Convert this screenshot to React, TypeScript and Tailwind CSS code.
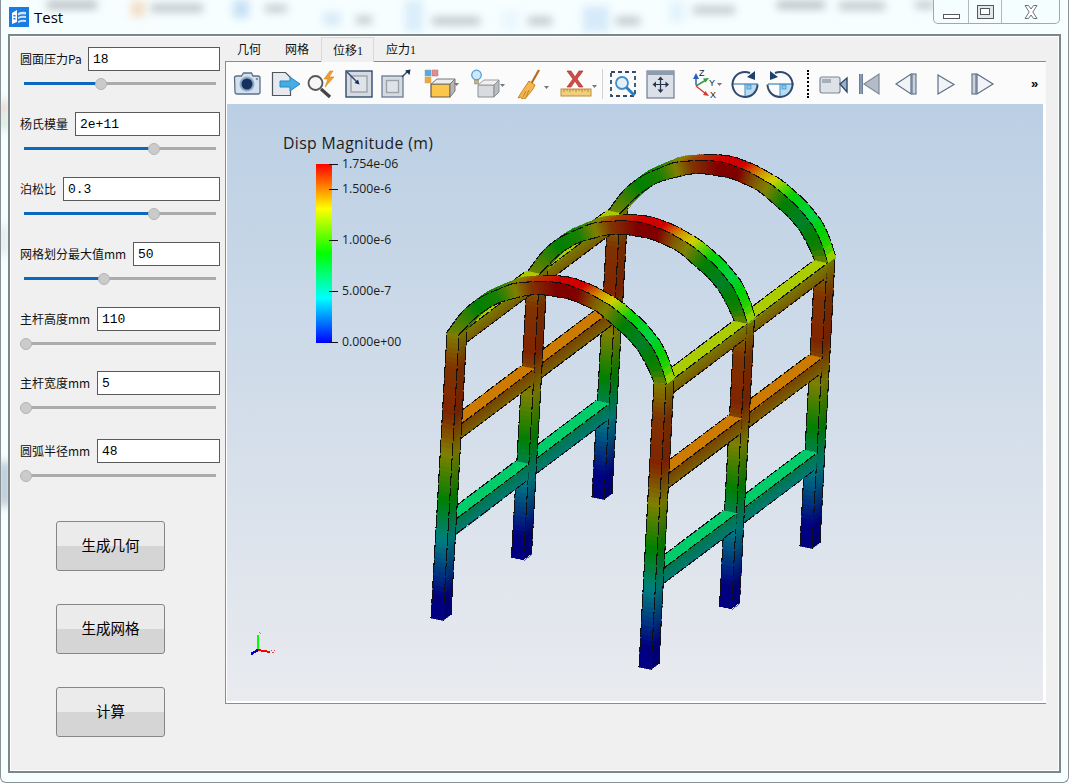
import React from "react";

type P = [number, number];
const add = (a: P, b: P, k = 1): P => [a[0] + b[0] * k, a[1] + b[1] * k];
const lerp = (a: P, b: P, t: number): P => [a[0] + (b[0] - a[0]) * t, a[1] + (b[1] - a[1]) * t];
const XV: P = [12, 2.5];
const ZV: P = [8, -6];
const BAY: P = [80.5, -60.5];

function rainbow(v: number, shade: number) {
  let r = 0, g = 0, b = 0;
  if (v < 0.25) { g = 4 * v; b = 1; }
  else if (v < 0.5) { g = 1; b = 1 - (v - 0.25) * 4; }
  else if (v < 0.75) { r = (v - 0.5) * 4; g = 1; }
  else { r = 1; g = 1 - (v - 0.75) * 4; }
  return `rgb(${Math.round(r * 255 * shade)},${Math.round(g * 255 * shade)},${Math.round(b * 255 * shade)})`;
}
function interp(knots: number[][], x: number) {
  if (x <= knots[0][0]) return knots[0][1];
  for (let i = 1; i < knots.length; i++) {
    if (x <= knots[i][0]) {
      const t = (x - knots[i - 1][0]) / (knots[i][0] - knots[i - 1][0]);
      return knots[i - 1][1] + (knots[i][1] - knots[i - 1][1]) * t;
    }
  }
  return knots[knots.length - 1][1];
}
const legK = [[0, 0], [0.08, 0], [0.28, 0.25], [0.42, 0.5], [0.58, 0.75], [0.72, 0.93], [0.88, 0.9], [1, 0.75]];
const archK = [[0, 0.72], [0.12, 0.5], [0.22, 0.55], [0.3, 0.75], [0.38, 0.9], [0.5, 1], [0.6, 1], [0.68, 0.82], [0.74, 0.74], [0.82, 0.5], [0.91, 0.42], [0.98, 0.55], [1, 0.72]];

const outerK = [[447, 332], [463, 310], [480, 297], [513, 283], [543, 281], [563, 283], [587, 292], [613, 307], [637, 328], [657, 353], [667, 384]];
const innerK = [[459, 334.5], [478, 315], [497, 303], [527, 295], [543, 294.5], [570, 299], [597, 311], [630, 340], [643, 357], [654, 382]];
const smooth = (knots: number[][], x: number) => {
  const d = 5;
  const lo = knots[0][0], hi = knots[knots.length - 1][0];
  const w = Math.min(d, x - lo, hi - x);
  return (interp(knots, x - w) + interp(knots, x) + interp(knots, x + w)) / 3;
};
const outer = (s: number): P => { const x = 447 + 220 * s; return [x, smooth(outerK, x)]; };
const inner = (s: number): P => { const x = 459 + 195 * s; return [x, smooth(innerK, x)]; };

const order: { kind: "poly" | "line"; pts: P[]; fill?: string }[] = [];
const quad = (pts: P[], fill: string) => order.push({ kind: "poly", pts, fill });
const edge = (pts: P[]) => order.push({ kind: "line", pts });

function leg(base: P, top: P, off: P) {
  const a = (f: number) => add(lerp(base, top, f), off);
  const n = 60;
  for (let i = 0; i < n; i++) {
    const f0 = i / n, f1 = (i + 1) / n;
    const v = interp(legK, (f0 + f1) / 2);
    const p0 = a(f0), p1 = a(f1);
    quad([add(p0, XV), add(add(p0, XV), ZV), add(add(p1, XV), ZV), add(p1, XV)], rainbow(v, 0.45));
    quad([p0, add(p0, XV), add(p1, XV), p1], rainbow(v, 0.5));
  }
  edge([a(0), a(1)]);
  edge([add(a(0), XV), add(a(1), XV)]);
  edge([add(add(a(0), XV), ZV), add(add(a(1), XV), ZV)]);
}
function arch(off: P) {
  const n = 100;
  const curve = (fn: (s: number) => P, shift: P) => {
    const pts: P[] = [];
    for (let i = 0; i <= n; i++) pts.push(add(add(fn(i / n), off), shift));
    return pts;
  };
  const topShade = (s: number) => (s < 0.3 ? 0.52 : s > 0.5 ? 0.82 : 0.52 + (s - 0.3) * 1.5);
  for (let i = 0; i < n; i++) {
    const s0 = i / n, s1 = (i + 1) / n, m = (s0 + s1) / 2;
    const v = interp(archK, m);
    const o0 = add(outer(s0), off), o1 = add(outer(s1), off);
    quad([o0, o1, add(o1, ZV), add(o0, ZV)], rainbow(v, topShade(m)));
  }
  for (let i = 0; i < n; i++) {
    const s0 = i / n, s1 = (i + 1) / n, m = (s0 + s1) / 2;
    const v = interp(archK, m);
    const o0 = add(inner(s0), off), o1 = add(inner(s1), off);
    quad([o0, o1, add(o1, ZV), add(o0, ZV)], rainbow(v, 0.45));
  }
  for (let i = 0; i < n; i++) {
    const s0 = i / n, s1 = (i + 1) / n, m = (s0 + s1) / 2;
    const v = interp(archK, m);
    quad([add(outer(s0), off), add(outer(s1), off), add(inner(s1), off), add(inner(s0), off)], rainbow(v, 0.5));
  }
  edge(curve(outer, [0, 0]));
  edge(curve(inner, [0, 0]));
  edge(curve(outer, ZV).slice(40));
}
function beam(base: P, top: P, off: P, fb: number, ft: number, topV: number) {
  const c = (f: number): P => add(add(lerp(base, top, f), XV), off);
  const n = 5;
  for (let i = 0; i < n; i++) {
    const f0 = fb + ((ft - fb) * i) / n, f1 = fb + ((ft - fb) * (i + 1)) / n;
    const v = interp(legK, (f0 + f1) / 2);
    quad([add(c(f0), ZV), add(c(f0), BAY), add(c(f1), BAY), add(c(f1), ZV)], rainbow(v, 0.47));
  }
  const t0 = add(c(ft), ZV), t1 = add(c(ft), BAY);
  const w: P = [-13.5, -3];
  quad([t0, t1, add(t1, w), add(t0, w)], rainbow(topV, 0.8));
  edge([t0, t1]);
  edge([add(c(fb), ZV), add(c(fb), BAY)]);
  edge([add(t0, w), add(t1, w)]);
}
const LB: P = [431, 618], LT: P = [447, 332], RB: P = [639, 667], RT: P = [654, 382];
for (let z = 2; z >= 0; z--) {
  const off: P = [BAY[0] * z, BAY[1] * z];
  leg(LB, LT, off);
  leg(RB, RT, off);
  arch(off);
  if (z > 0) {
    const o2: P = [BAY[0] * (z - 1), BAY[1] * (z - 1)];
    for (const [b, t] of [[LB, LT], [RB, RT]] as [P, P][]) {
      beam(b, t, o2, 0.28, 0.335, 0.37);
      beam(b, t, o2, 0.615, 0.668, 0.85);
      beam(b, t, o2, 0.95, 1, 0.71);
    }
  }
}
const str = (pts: P[]) => pts.map((p) => `${p[0].toFixed(1)},${p[1].toFixed(1)}`).join(" ");

function Frame3D() {
  return (
    <g shapeRendering="crispEdges">
      {order.map((o, i) =>
        o.kind === "poly" ? (
          <polygon key={i} points={str(o.pts)} fill={o.fill} stroke={o.fill} strokeWidth={0.6} />
        ) : (
          <polyline key={i} points={str(o.pts)} fill="none" stroke="#111" strokeWidth={1.1} strokeDasharray="13 2" />
        )
      )}
    </g>
  );
}

const cjk = "font-['Noto_Sans_CJK_SC','Noto_Sans',sans-serif]";

function Field({ label, labelW, value, fill, mb }: { label: string; labelW: string; value: string; fill: string; mb: string }) {
  return (
    <div className={mb}>
      <div className="flex items-center h-[24px] pl-[9px] pr-[5px]">
        <span className={`${labelW} text-[12px] leading-[24px] text-[#111] whitespace-nowrap ${cjk}`}>{label}</span>
        <div className="flex-1 h-[24px] border border-[#5a5a5a] bg-white pl-[4px] font-['Liberation_Mono',monospace] text-[13px] leading-[23px] text-black">{value}</div>
      </div>
      <div className="flex items-center h-[13px] mt-[6px] ml-[13px] w-[192px]">
        <div className={`${fill} h-[3px] bg-[#0b68bd]`} />
        <div className="w-[12px] h-[12px] -ml-[6px] -mr-[6px] rounded-full bg-[#cbcbcb] border border-[#b4b4b4] relative z-10" />
        <div className="flex-1 h-[3px] bg-[#ababab]" />
      </div>
    </div>
  );
}

function Btn({ label, mt }: { label: string; mt: string }) {
  return (
    <div className={`${mt} ml-[45px] w-[109px] h-[50px] pb-[3px] rounded-[3px] border border-[#868686] bg-[linear-gradient(#ebebeb_0,#ebebeb_50%,#d5d5d5_50%,#d5d5d5_100%)] flex items-center justify-center text-[14.5px] text-black ${cjk}`}>
      {label}
    </div>
  );
}

const navy = "#2f4a6c";
const slate = "#5b6f88";
const Icon = ({ w = 30, className = "", children }: { w?: number; className?: string; children: React.ReactNode }) => (
  <svg width={w} height={30} viewBox={`0 0 ${w} 30`} className={`shrink-0 ${className}`}>
    {children}
  </svg>
);
const Drop = ({ x, y }: { x: number; y: number }) => <path d={`M${x} ${y}h5l-2.5 3z`} fill="#777" />;

function Toolbar() {
  return (
    <div className="h-[42px] flex items-center pt-[1px] bg-[#fbfbfb]">
      <Icon className="ml-[7px]">
        <path d="M1.500 9q0-2 2-2h5l2-3h8l1.500 3h5q2 0 2 2v14q0 2-2 2h-21q-2 0-2-2z" fill="#d3e0ee" stroke={slate} strokeWidth="1.300" />
        <circle cx="14" cy="15" r="7.500" fill="#90a9c6" />
        <circle cx="14" cy="15" r="5.500" fill="#16305f" />
        <circle cx="24" cy="10" r="1.200" fill="#7c8fa8" />
      </Icon>
      <Icon className="ml-[8px]">
        <path d="M1.500 3.500h13l5 5v18h-18z" fill="#e6e9ee" stroke="#4d5560" strokeWidth="1.200" />
        <path d="M9 12h10v-4l10 7-10 7v-4h-10z" fill="#45ace4" stroke="#2a86c4" strokeWidth="1" />
      </Icon>
      <Icon className="ml-[5px]">
        <circle cx="9.500" cy="14" r="7" fill="#f4f6f8" stroke="#555" strokeWidth="1.800" />
        <path d="M15 20l9 8" stroke="#444" strokeWidth="3.200" />
        <path d="M24 2l-6 8h4l-3 8 9-10h-5l4-6z" fill="#f0a030" stroke="#d47f10" strokeWidth=".6" />
      </Icon>
      <Icon className="ml-[9px]">
        <rect x="1" y="2" width="26" height="26" fill="#d6dbe2" stroke={navy} strokeWidth="1.400" />
        <rect x="6" y="7" width="16" height="16" fill="#dfe3e8" stroke="#9aa3ad" strokeWidth="1.400" />
        <path d="M2 3l11 11" stroke={navy} strokeWidth="1.400" />
        <path d="M14.500 15.500l-5-1.500 3.500-3.500z" fill="#16305f" />
      </Icon>
      <Icon className="ml-[6px]">
        <rect x="1" y="7" width="21" height="21" fill="#d6dbe2" stroke="#72829a" strokeWidth="1.400" />
        <rect x="5.500" y="11.500" width="12" height="12" fill="#dfe3e8" stroke="#9aa3ad" strokeWidth="1.400" />
        <path d="M21 8l6-6" stroke={navy} strokeWidth="1.400" />
        <path d="M29.500 0.500l-1 5.500-4.500-4.500z" fill="#16305f" />
      </Icon>
      <Icon w={38} className="ml-[12px]">
        <rect x="2" y="1" width="6" height="6" fill="#59a7e0" stroke="#7aa" strokeWidth=".5" />
        <rect x="9" y="1" width="6" height="6" fill="#e58b8b" stroke="#a77" strokeWidth=".5" />
        <rect x="2" y="8" width="6" height="6" fill="#f0a83a" stroke="#ba7" strokeWidth=".5" />
        <path d="M8 15h19v13h-19z" fill="#fbc64a" stroke="#66594a" strokeWidth="1.200" />
        <path d="M8 15l6-5h18l-5 5z" fill="#ececec" stroke="#777" strokeWidth="1" />
        <path d="M27 15l5-5v12l-5 6z" fill="#b5b5b5" stroke="#777" strokeWidth="1" />
        <Drop x={31} y={14} />
      </Icon>
      <Icon w={36} className="ml-[9px]">
        <circle cx="6.500" cy="6" r="4.800" fill="#cfe7f8" stroke="#4c9cd8" strokeWidth="1.200" />
        <path d="M4.500 11h4v4h-4z" fill="#c9b27f" stroke="#888" strokeWidth=".6" />
        <path d="M8 16h16v12h-16z" fill="#d9dcde" stroke="#8b8f94" strokeWidth="1" />
        <path d="M8 16l6-5h15l-5 5z" fill="#f1f1f1" stroke="#9b9b9b" strokeWidth="1" />
        <path d="M24 16l5-5v12l-5 5z" fill="#b9bcc0" stroke="#8b8f94" strokeWidth="1" />
        <Drop x={30} y={15} />
      </Icon>
      <Icon w={36} className="ml-[9px]">
        <path d="M24 1l-8 14" stroke="#b36a1c" strokeWidth="2.200" />
        <path d="M14 12l6 4-2 4-8 10-2-1-1 1-1-2-3 1 3-5z" fill="#f2b84f" stroke="#c57b17" strokeWidth=".9" />
        <path d="M11 22l-3 6M14 21l-3 7" stroke="#b87319" strokeWidth=".8" />
        <Drop x={29} y={17} />
      </Icon>
      <Icon w={38} className="ml-[9px]">
        <path d="M7 2l4 0 4 6 4-6 4 0-6 8 6 8h-4l-4-6-4 6h-4l6-8z" fill="#d34b46" stroke="#a8322e" strokeWidth=".7" />
        <rect x="1" y="20" width="30" height="7" fill="#f3cd7e" stroke="#bb8f3e" strokeWidth="1" />
        <path d="M4 20v3M7 20v2M10 20v3M13 20v2M16 20v3M19 20v2M22 20v3M25 20v2M28 20v3" stroke="#a17628" strokeWidth=".8" />
        <Drop x={32} y={16} />
      </Icon>
      <div className="w-px h-[30px] ml-[4px] bg-[#d2d2d2]" />
      <Icon className="ml-[6px]">
        <rect x="2" y="3" width="24" height="24" fill="none" stroke={navy} strokeWidth="1.800" strokeDasharray="4 3" />
        <circle cx="13" cy="14" r="6" fill="#e3f0fa" stroke="#3f8fcf" strokeWidth="1.800" />
        <path d="M17.500 18.500l8 8" stroke="#2a7fc4" strokeWidth="3" />
      </Icon>
      <Icon className="ml-[7px]">
        <rect x="1" y="2" width="27" height="27" fill="#dbdfe7" stroke="#6f7d90" strokeWidth="1.200" />
        <rect x="1" y="2" width="27" height="4" fill="#8e9cb2" />
        <path d="M14.500 9v13M8 15.500h13" stroke="#27364a" strokeWidth="1.200" />
        <path d="M14.500 7.500l-3 3.500h6zM14.500 24l-3-3.500h6zM6.500 15.500l3.500-3v6zM23 15.500l-3.500-3v6z" fill="#27364a" />
      </Icon>
      <Icon w={38} className="ml-[15px]">
        <path d="M5 16v-8" stroke="#2a5fb8" strokeWidth="1.500" />
        <path d="M5 4l-3 6h6z" fill="#2a5fb8" />
        <path d="M5 17l10-6" stroke="#3a9a42" strokeWidth="1.500" />
        <path d="M18 9l-6 .5 2.500 4z" fill="#3a9a42" />
        <path d="M5 17l10 8" stroke="#d63a36" strokeWidth="1.500" />
        <path d="M18 27l-6-1 2.500-4z" fill="#d63a36" />
        <text x="8" y="7" fontSize="9" fontFamily="Liberation Sans" fill="#222">Z</text>
        <text x="18" y="17" fontSize="9" fontFamily="Liberation Sans" fill="#222">Y</text>
        <text x="19" y="29" fontSize="9" fontFamily="Liberation Sans" fill="#222">X</text>
        <Drop x={26} y={14} />
      </Icon>
      <Icon className="ml-[1px]">
        <path d="M15 15h12v1a12 12 0 0 1-12 11z" fill="#b9dcf4" />
        <path d="M15 15v12" stroke="#3d8dc9" strokeWidth="1" />
        <rect x="17" y="16" width="4" height="4" fill="#8fc4ea" stroke="#3d8dc9" strokeWidth=".7" />
        <path d="M2 15h26" stroke="#2f78b4" strokeWidth="1.100" />
        <path d="M20 4a12.500 12.500 0 1 0 7.500 11.500" fill="none" stroke={navy} strokeWidth="2" />
        <path d="M25 2v9l-8-3z" fill="#1f3f6c" />
      </Icon>
      <Icon className="ml-[6px]">
        <path d="M14 15h12v1a12 12 0 0 1-12 11z" fill="#b9dcf4" />
        <path d="M14 15v12" stroke="#3d8dc9" strokeWidth="1" />
        <rect x="16" y="16" width="4" height="4" fill="#8fc4ea" stroke="#3d8dc9" strokeWidth=".7" />
        <path d="M2 15h26" stroke="#2f78b4" strokeWidth="1.100" />
        <path d="M9 4a12.500 12.500 0 1 1-7.500 11.500" fill="none" stroke={navy} strokeWidth="2" />
        <path d="M4 2v9l8-3z" fill="#1f3f6c" />
      </Icon>
      <div className="w-[2px] h-[28px] ml-[11px] border-l-2 border-dotted border-black" />
      <Icon className="ml-[10px]">
        <rect x="1" y="8" width="20" height="16" rx="2" fill="#dde2e9" stroke="#7b8797" strokeWidth="1.200" />
        <rect x="3" y="10" width="9" height="4" fill="#a6aeb9" />
        <path d="M21 15l7-6v14z" fill="#9fb0c6" stroke={navy} strokeWidth="1.400" />
      </Icon>
      <Icon w={26} className="ml-[9px]">
        <path d="M3 5v20" stroke={navy} strokeWidth="3.400" />
        <path d="M3 5v20" stroke="#c9d1db" strokeWidth="1.200" />
        <path d="M6 15l15-10v20z" fill="#b4bcc7" stroke="#7e8a99" strokeWidth="1.200" />
      </Icon>
      <Icon w={26} className="ml-[11px]">
        <path d="M1 15l15-10v20z" fill="#f1f3f6" stroke={slate} strokeWidth="1.200" />
        <rect x="17" y="5" width="4" height="20" fill="#c9d1db" stroke={slate} strokeWidth="1.100" />
      </Icon>
      <Icon w={26} className="ml-[12px]">
        <path d="M5 6l16 9.500-16 9.500z" fill="#f1f3f6" stroke={slate} strokeWidth="1.200" />
      </Icon>
      <Icon w={26} className="ml-[10px]">
        <rect x="3" y="5" width="4" height="20" fill="#c9d1db" stroke={slate} strokeWidth="1.100" />
        <path d="M8 5l16 10-16 10z" fill="#f1f3f6" stroke={slate} strokeWidth="1.200" />
      </Icon>
      <span className="ml-[36px] font-['Liberation_Sans',sans-serif] font-bold text-[13px] text-black">»</span>
    </div>
  );
}

const ticks: [number, string][] = [
  [164.5, "1.754e-06"],
  [189.5, "1.500e-6"],
  [240.5, "1.000e-6"],
  [291.5, "5.000e-7"],
  [342.5, "0.000e+00"],
];

function Viewer() {
  return (
    <svg width={816} height={597} viewBox="227 104 816 597" className="block ml-px">
      <defs>
        <linearGradient id="bg" x1="0" y1="0" x2="0" y2="1">
          <stop offset="0" stopColor="#bbcfe4" />
          <stop offset="1" stopColor="#e9ebef" />
        </linearGradient>
        <linearGradient id="bar" x1="0" y1="0" x2="0" y2="1">
          <stop offset="0" stopColor="#ff0000" />
          <stop offset=".25" stopColor="#ffff00" />
          <stop offset=".5" stopColor="#00ff00" />
          <stop offset=".75" stopColor="#00ffff" />
          <stop offset="1" stopColor="#0000ff" />
        </linearGradient>
      </defs>
      <rect x="227" y="104" width="816" height="597" fill="url(#bg)" />
      <text x="283" y="149" fontFamily="Open Sans" fontSize="15.800" letterSpacing=".35" fill="#1c1c1c">Disp Magnitude (m)</text>
      <rect x="316" y="164" width="16" height="179" fill="url(#bar)" />
      {ticks.map(([y, t]) => (
        <g key={t}>
          <path d={`M329 ${y}h9`} stroke="#111" strokeWidth="1" />
          <text x="342" y={y + 3} fontFamily="Open Sans" fontSize="12.300" fill="#1c1c1c">{t}</text>
        </g>
      ))}
      <Frame3D />
      <g shapeRendering="crispEdges">
        <path d="M258 650v-15" stroke="#00ff00" strokeWidth="2" />
        <path d="M258 650l12 2" stroke="#ff0000" strokeWidth="2" />
        <path d="M258 650l-7 4" stroke="#0000c8" strokeWidth="2.500" />
        <path d="M260 634l1-1M259 632l1 1" stroke="#44cc44" strokeWidth="1" />
        <path d="M271 650h1M274 650h1M272 652h2" stroke="#dd4444" strokeWidth="1" />
      </g>
    </svg>
  );
}

const blobs = [
  "left-[46px] top-[1px] w-[50px] h-[8px] bg-[#8a8f96]",
  "left-[130px] top-[1px] w-[14px] h-[16px] bg-[#f3c7a0]",
  "left-[150px] top-[4px] w-[52px] h-[8px] bg-[#9aa0a8]",
  "left-[232px] top-[0px] w-[16px] h-[18px] bg-[#a8cdf0]",
  "left-[264px] top-[5px] w-[22px] h-[7px] bg-[#9aa0a8]",
  "left-[322px] top-[12px] w-[18px] h-[14px] bg-[#c4dff5]",
  "left-[355px] top-[16px] w-[16px] h-[8px] bg-[#a0a6ac]",
  "left-[404px] top-[0px] w-[18px] h-[32px] bg-[#c8e2f8]",
  "left-[431px] top-[17px] w-[48px] h-[8px] bg-[#9aa0a8]",
  "left-[500px] top-[10px] w-[18px] h-[20px] bg-[#e3f3fd]",
  "left-[527px] top-[17px] w-[24px] h-[8px] bg-[#9aa0a8]",
  "left-[582px] top-[6px] w-[26px] h-[26px] bg-[#c0ddf6]",
  "left-[615px] top-[17px] w-[24px] h-[8px] bg-[#9aa0a8]",
  "left-[668px] top-[2px] w-[16px] h-[20px] bg-[#d6ecfa]",
  "left-[692px] top-[6px] w-[42px] h-[8px] bg-[#a0a6ac]",
  "left-[776px] top-[1px] w-[48px] h-[8px] bg-[#8f959c]",
  "left-[838px] top-[2px] w-[46px] h-[8px] bg-[#9ba1a7]",
  "left-[914px] top-[1px] w-[20px] h-[8px] bg-[#a3a9af]",
  "left-[0px] top-[100px] w-[6px] h-[16px] bg-[#d3a28a]",
  "left-[0px] top-[116px] w-[6px] h-[14px] bg-[#9fd1a8]",
  "left-[0px] top-[462px] w-[7px] h-[44px] bg-[#5f7d9c]",
  "left-[0px] top-[225px] w-[6px] h-[30px] bg-[#c4ccd4]",
];

export default function App() {
  return (
    <div className="relative w-[1069px] h-[783px] overflow-hidden bg-[#f6feff] flex flex-col rounded-b-[6px] border-l border-b border-r border-[#8b9296]">
      {blobs.map((b) => (
        <div key={b} className={`absolute blur-[4px] opacity-60 ${b}`} />
      ))}
      <div className="relative h-[34px] flex items-start shrink-0">
        <svg width={20} height={20} viewBox="0 0 20 20" className="ml-[8px] mt-[7px]">
          <rect width="20" height="20" fill="#1a7ce2" />
          <path d="M3 6l5-3v12l-5 2z" fill="#fff" />
          <path d="M9 6q4-2 8-1v2.500q-4-1-8 1zM9 10q4-2 8-1v2q-4-1-8 1zM9 14q4-2 8-1v2q-4-1-8 1z" fill="#cfe5fa" />
          <path d="M4.500 8h2v1.500h-2zM4.500 11h2v1.500h-2z" fill="#1a7ce2" />
        </svg>
        <span className="ml-[5px] mt-[7px] font-['Open_Sans',sans-serif] text-[15px] leading-[20px] text-black">Test</span>
        <div className="absolute left-[932px] top-0 w-[127px] h-[24px] flex bg-[#f4feff] border border-t-0 border-[#a3a8ac] rounded-b-[5px]">
          <div className="w-[35px] flex items-end justify-center pb-[4px] border-r border-[#b5b9bc]">
            <div className="w-[17px] h-[5px] border border-[#55595c] bg-white" />
          </div>
          <div className="w-[33px] flex items-center justify-center border-r border-[#b5b9bc]">
            <div className="w-[17px] h-[14px] border border-[#55595c] bg-[#e5e8ea] flex items-center justify-center">
              <div className="w-[10px] h-[7px] border border-[#55595c] bg-white" />
            </div>
          </div>
          <div className="flex-1 flex items-center justify-center">
            <svg width={16} height={16} viewBox="0 0 16 16">
              <path d="M2 1.500h3.500l2.500 3.500 2.500-3.500h3.500l-4.200 6.500 4.200 6.500h-3.500l-2.500-3.500-2.500 3.500h-3.500l4.200-6.500z" fill="#fff" stroke="#6b7175" strokeWidth="1" />
            </svg>
          </div>
        </div>
      </div>
      <div className="relative ml-[7px] w-[1053px] h-[739px] border-2 border-[#7b8789] bg-white p-px">
        <div className="flex h-full bg-[#f0f0f0]">
          <div className="w-[214px] shrink-0 pt-[10px]">
            <Field label="圆面压力Pa" labelW="w-[68px]" value="18" fill="w-[77px]" mb="mb-[22px]" />
            <Field label="杨氏模量" labelW="w-[55px]" value="2e+11" fill="w-[130px]" mb="mb-[22px]" />
            <Field label="泊松比" labelW="w-[43px]" value="0.3" fill="w-[130px]" mb="mb-[22px]" />
            <Field label="网格划分最大值mm" labelW="w-[113px]" value="50" fill="w-[80px]" mb="mb-[22px]" />
            <Field label="主杆高度mm" labelW="w-[77px]" value="110" fill="w-[2px]" mb="mb-[21px]" />
            <Field label="主杆宽度mm" labelW="w-[77px]" value="5" fill="w-[2px]" mb="mb-[25px]" />
            <Field label="圆弧半径mm" labelW="w-[77px]" value="48" fill="w-[2px]" mb="mb-0" />
            <Btn label="生成几何" mt="mt-[39px]" />
            <Btn label="生成网格" mt="mt-[33px]" />
            <Btn label="计算" mt="mt-[33px]" />
          </div>
          <div className="w-[821px] shrink-0">
            <div className={`h-[24px] flex text-[12px] text-[#111] font-['Liberation_Serif','Noto_Sans_CJK_SC',serif]`}>
              <div className="w-[48px] pl-[12px] leading-[27px]">几何</div>
              <div className="w-[48px] pl-[12px] leading-[27px]">网格</div>
              <div className="relative z-10 w-[53px] h-[25px] pl-[11px] leading-[26px] bg-[#f0f0f0] border border-b-0 border-[#d9d9d9]">位移1</div>
              <div className="w-[53px] pl-[12px] leading-[27px]">应力1</div>
            </div>
            <div className="h-[643px] border-l border-t border-b border-[#8b8b96] bg-white">
              <Toolbar />
              <Viewer />
            </div>
          </div>
        </div>
      </div>
    </div>
  );
}
